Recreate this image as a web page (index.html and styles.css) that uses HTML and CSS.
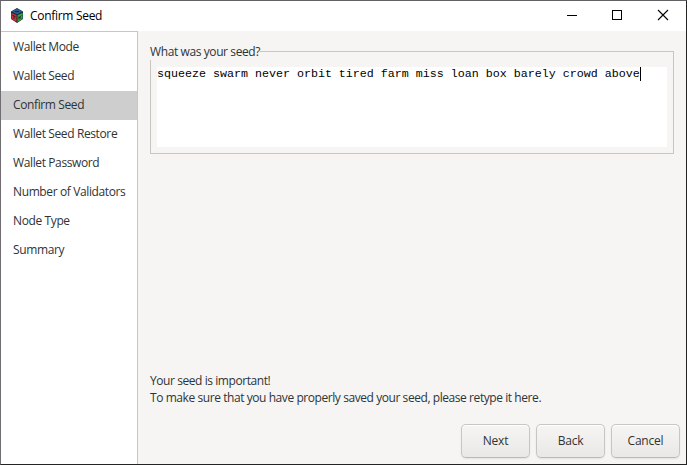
FILE: index.html
```html
<!DOCTYPE html>
<html lang="en">
<head>
<meta charset="utf-8">
<title>Confirm Seed</title>
<link rel="stylesheet" href="styles.css">
</head>
<body>
<div class="window">
  <header class="titlebar">
    <svg class="logo" width="12" height="15" viewBox="0 0 12 15">
      <path d="M6 0 12 3.5V11L6 15 0 11V3.5Z" fill="#20252b"/>
      <path d="M6 .4 11.4 3.6 6 6.6 .6 3.6Z" fill="#285b96"/>
      <path d="M.4 4.8 5.5 7.3V14L.4 10.8Z" fill="#cf3038"/>
      <path d="M11.6 4.8 6.5 7.3V14L11.6 10.8Z" fill="#2fa744"/>
      <path d="M4 3.6H8M1.2 7 4.6 8.7M3 8V11M8 8.5V11.5M8 10 10.3 7.5M8.5 9.5 10.3 10.3" fill="none" stroke="#20252b" stroke-width=".9"/>
    </svg>
    <h1 class="title">Confirm Seed</h1>
    <div class="controls">
      <svg width="46" height="30" viewBox="0 0 46 30" shape-rendering="crispEdges"><path d="M18 14.5H28" stroke="#000"/></svg>
      <svg width="46" height="30" viewBox="0 0 46 30" shape-rendering="crispEdges"><path d="M17.5 9.5H26.5V18.5H17.5Z" fill="none" stroke="#000"/></svg>
      <svg width="46" height="30" viewBox="0 0 46 30"><path d="M17 9 27 19M27 9 17 19" fill="none" stroke="#000" stroke-width="1.1"/></svg>
    </div>
  </header>
  <div class="body">
    <nav class="steps">
      <div class="step">Wallet Mode</div>
      <div class="step">Wallet Seed</div>
      <div class="step current">Confirm Seed</div>
      <div class="step">Wallet Seed Restore</div>
      <div class="step">Wallet Password</div>
      <div class="step">Number of Validators</div>
      <div class="step">Node Type</div>
      <div class="step">Summary</div>
    </nav>
    <main class="page">
      <fieldset class="seed-frame">
        <legend>What was your seed?</legend>
        <div class="seed-input">squeeze swarm never orbit tired farm miss loan box barely crowd above<span class="caret"></span></div>
      </fieldset>
      <p class="note">Your seed is important!<br>To make sure that you have properly saved your seed, please retype it here.</p>
      <div class="actions">
        <button>Next</button>
        <button>Back</button>
        <button>Cancel</button>
      </div>
    </main>
  </div>
</div>
</body>
</html>
```
FILE: styles.css
```css
* { box-sizing: border-box; }
body {
  margin: 0;
  font: 12px/17px "Open Sans", "Noto Sans", sans-serif;
  letter-spacing: -0.4px;
  color: #2e3436;
}
.window {
  width: 687px;
  height: 465px;
  display: flex;
  flex-direction: column;
  border: 1px solid #242424;
  border-top-color: #626064;
  border-left-color: #706e72;
  background: #f6f5f4;
}
.titlebar {
  height: 30px;
  flex: none;
  display: flex;
  background: #fff;
  color: #000;
}
.logo { margin: 7px 7px 0 10px; }
.title {
  margin: 6px 0 0;
  font-size: 12px;
  font-weight: 400;
  line-height: 17px;
  letter-spacing: -0.3px;
}
.controls { display: flex; margin: 0 -1px 0 auto; }
.controls svg { display: block; }
.body { flex: 1; display: flex; min-height: 0; }
.steps {
  width: 137px;
  flex: none;
  border-top: 1px solid #c9c6c1;
  border-right: 1px solid #c9c6c1;
  background: #fff;
  padding-top: 1px;
}
.step {
  height: 29px;
  padding-left: 12px;
  line-height: 27px;
  letter-spacing: -0.38px;
  white-space: nowrap;
}
.current { background: #cecece; }
.page {
  flex: 1;
  display: flex;
  flex-direction: column;
  padding: 12px 6px 6px 12px;
}
.seed-frame {
  width: 524px;
  height: 111px;
  margin: 0;
  padding: 7px 6px 6px;
  border: 1px solid #c9c6c1;
}
.seed-frame legend {
  height: 17px;
  margin-left: -7px;
  padding: 0;
  white-space: nowrap;
}
.seed-input {
  height: 80px;
  background: #fff;
  color: #000;
  font: 11.667px/15px "Liberation Mono", monospace;
  letter-spacing: 0;
  white-space: nowrap;
}
.caret { display: inline-block; width: 1px; height: 14px; background: #000; vertical-align: top; }
.note { margin: auto 0 18px; white-space: nowrap; letter-spacing: -0.43px; }
.actions { display: flex; justify-content: flex-end; gap: 6px; }
button {
  width: 69px;
  height: 34px;
  padding: 0 0 1px;
  border: 1px solid #c9c5c0;
  border-bottom-color: #bdb8b1;
  border-radius: 5px;
  background: linear-gradient(#f6f5f4, #e9e8e6);
  box-shadow: inset 0 1px #fff, 0 1px 2px rgba(0, 0, 0, .08);
  font: inherit;
  letter-spacing: -0.2px;
  color: inherit;
}
```
